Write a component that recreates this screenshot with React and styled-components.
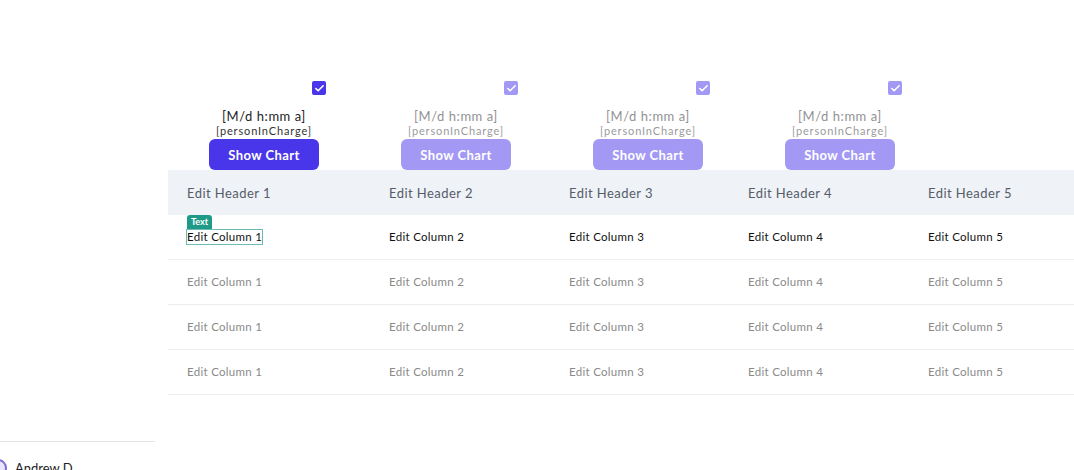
import styled, { createGlobalStyle } from "styled-components";
import { Check } from "lucide-react";

const GlobalStyle = createGlobalStyle`
  html, body {
    margin: 0;
    padding: 0;
    background: #fff;
    overflow: hidden;
    font-family: "Lato", "Liberation Sans", sans-serif;
  }
  * { box-sizing: border-box; }
`

const Page = styled.div`
  display: flex;
  height: 470px;
  overflow: hidden;
`

const Sidebar = styled.aside`
  width: 155px;
  flex-shrink: 0;
  min-height: 490px;
  display: flex;
  flex-direction: column;
  justify-content: flex-end;
`

const SidebarFooter = styled.div`
  border-top: 1px solid #e3e3ea;
  padding: 16px 0 12px;
`

const UserRow = styled.div`
  display: flex;
  align-items: center;
  gap: 8px;
  height: 20px;
  font-size: 13px;
  color: #222;
`

const Avatar = styled.div`
  width: 18px;
  height: 18px;
  margin-left: -11px;
  border-radius: 50%;
  border: 2px solid #7b6fd6;
  background: #e9e6fb;
`

const Main = styled.main`
  flex: 1;
  min-width: 0;
  padding: 81px 0 0 13px;
  display: flex;
  flex-direction: column;
`

const ChartBar = styled.div`
  display: flex;
`

const ChartCell = styled.div`
  width: 192px;
  display: flex;
  flex-direction: column;
  align-items: center;
  opacity: ${p => (p.$active ? 1 : 0.5)};
`

const CheckRow = styled.div`
  width: 124px;
  display: flex;
  justify-content: flex-end;
  margin-bottom: 14px;
`

const CheckBox = styled.div`
  width: 14px;
  height: 14px;
  border-radius: 2px;
  background: #4a36ea;
  display: flex;
  align-items: center;
  justify-content: center;
  color: #fff;
`

const DateLabel = styled.div`
  font-size: 13px;
  line-height: 15px;
  letter-spacing: 0.55px;
  color: #222;
`

const PersonLabel = styled.div`
  font-size: 11px;
  line-height: 13px;
  letter-spacing: 0.85px;
  color: #333;
`

const ShowChartBtn = styled.button`
  margin-top: 2px;
  width: 110px;
  height: 31px;
  border: none;
  border-radius: 6px;
  background: #4a36ea;
  color: #fff;
  font-family: inherit;
  font-size: 13px;
  font-weight: 700;
  letter-spacing: 0.4px;
  cursor: pointer;
`

const Table = styled.div`
  display: flex;
  flex-direction: column;
`

const Row = styled.div`
  display: grid;
  grid-template-columns: 202px 180px 179px 180px 1fr;
  height: 45px;
  align-items: center;
  background: ${p => (p.$head ? "#eff2f7" : "#fff")};
  border-bottom: ${p => (p.$head ? "none" : "1px solid #ebedf0")};
`

const HeadCell = styled.div`
  padding-left: 19px;
  font-size: 13px;
  letter-spacing: 0.45px;
  color: #555d69;
`

const Cell = styled.div`
  padding-left: 19px;
  font-size: 11.5px;
  letter-spacing: 0.3px;
  line-height: 14px;
  margin-top: -1px;
  color: ${p => (p.$dark ? "#111" : "#8a8a8a")};
`

const Selected = styled.span`
  position: relative;
  display: inline-block;
  outline: 1px solid #6cbdb1;
  line-height: 14px;
`

const TypeBadge = styled.span`
  position: absolute;
  left: 0;
  bottom: 100%;
  margin-bottom: 1px;
  padding: 0 4px;
  height: 14px;
  line-height: 14px;
  border-radius: 3px 3px 0 0;
  background: #1f9a89;
  color: #fff;
  font-size: 9px;
  font-weight: 700;
  letter-spacing: 0;
`

const cols = [1, 2, 3, 4, 5];

function ChartControl({ active }) {
  return (
    <ChartCell $active={active}>
      <CheckRow>
        <CheckBox>
          <Check size={11} strokeWidth={3.5} />
        </CheckBox>
      </CheckRow>
      <DateLabel>[M/d h:mm a]</DateLabel>
      <PersonLabel>[personInCharge]</PersonLabel>
      <ShowChartBtn>Show Chart</ShowChartBtn>
    </ChartCell>
  )
}

export default function App() {
  return (
    <Page>
      <GlobalStyle />
      <Sidebar>
        <SidebarFooter>
          <UserRow>
            <Avatar />
            Andrew D
          </UserRow>
        </SidebarFooter>
      </Sidebar>
      <Main>
        <ChartBar>
          <ChartControl active />
          <ChartControl />
          <ChartControl />
          <ChartControl />
        </ChartBar>
        <Table>
          <Row $head>
            {cols.map(c => <HeadCell key={c}>Edit Header {c}</HeadCell>)}
          </Row>
          <Row>
            {cols.map(c => (
              <Cell key={c} $dark>
                {c === 1 ? (
                  <Selected>
                    <TypeBadge>Text</TypeBadge>
                    Edit Column 1
                  </Selected>
                ) : `Edit Column ${c}`}
              </Cell>
            ))}
          </Row>
          {[0, 1, 2].map(r => (
            <Row key={r}>
              {cols.map(c => <Cell key={c}>Edit Column {c}</Cell>)}
            </Row>
          ))}
        </Table>
      </Main>
    </Page>
  )
}
